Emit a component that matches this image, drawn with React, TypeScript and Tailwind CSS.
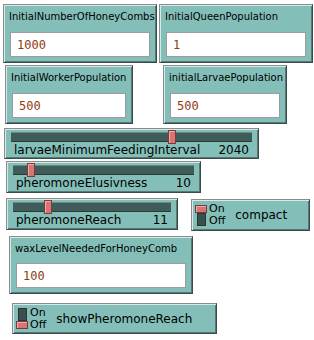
import React from "react";

const box =
  "bg-[#83bfb8] border border-[#8c8c8c] border-r-[#3c4a48] border-b-[#3c4a48] shadow-[inset_1px_1px_0_#d3ebe8,inset_-1px_-1px_0_#557a76]";

function InputBox({ label, value, className }: { label: string; value: string; className: string }) {
  return (
    <div className={`${box} flex flex-col ${className}`}>
      <div className="pl-[5px] pt-[6px] text-[10px] leading-[12px] text-black font-['DejaVu_Sans',sans-serif] whitespace-nowrap">
        {label}
      </div>
      <div className="mt-auto mb-[5px] mx-[6px] h-[25px] bg-white border border-[#9c9c9c] flex items-center pl-[6px] text-[12px] text-[#8f3b10] font-['DejaVu_Sans_Mono',monospace]">
        {value}
      </div>
    </div>
  );
}

function Slider({ label, value, pos, className }: { label: string; value: string; pos: number; className: string }) {
  return (
    <div className={`${box} flex flex-col px-[6px] pt-[3px] ${className}`}>
      <div className="relative h-[10px] bg-[#3f5c58] border-t border-t-[#6a8a85] border-b border-b-[#2b3a38]">
        <div
          className="absolute top-[-3px] w-[8px] h-[14px] bg-[#d77474] border border-[#7c3a3a] shadow-[inset_1px_1px_0_#eeaaaa]"
          style={{ left: `calc(${pos * 100}% - 4px)` }}
        />
      </div>
      <div className="flex justify-between px-[3px] mt-[1px] text-[12px] leading-[14px] text-black font-['DejaVu_Sans',sans-serif] whitespace-nowrap">
        <span>{label}</span>
        <span>{value}</span>
      </div>
    </div>
  );
}

function Switch({ label, on, className }: { label: string; on: boolean; className: string }) {
  const handle = <div className="w-[12px] h-[8px] bg-[#d77474] border border-[#7c3a3a] shadow-[inset_1px_1px_0_#eeaaaa]" />;
  return (
    <div className={`${box} flex items-center pl-[3px] ${className}`}>
      <div className="flex flex-col items-center w-[12px] h-[21px]">
        {on && handle}
        <div className="flex-1 w-[9px] bg-[#3b4f4c] border border-[#2a3634]" />
        {!on && handle}
      </div>
      <div className="ml-[2px] flex flex-col text-[11px] leading-[12px] text-black font-['DejaVu_Sans',sans-serif]">
        <span>On</span>
        <span>Off</span>
      </div>
      <div className="ml-[10px] text-[12px] text-black font-['DejaVu_Sans',sans-serif] whitespace-nowrap">{label}</div>
    </div>
  );
}

export default function App() {
  return (
    <main className="w-[314px] h-[340px] bg-white overflow-hidden">
      <div className="flex flex-col">
        <div className="flex mt-[4px] ml-[3px]">
          <InputBox label="InitialNumberOfHoneyCombs" value="1000" className="w-[154px] h-[59px]" />
          <InputBox label="InitialQueenPopulation" value="1" className="ml-[2px] w-[154px] h-[59px]" />
        </div>
        <div className="flex mt-[2px] ml-[5px]">
          <InputBox label="InitialWorkerPopulation" value="500" className="w-[128px] h-[59px]" />
          <InputBox label="initialLarvaePopulation" value="500" className="ml-[30px] w-[124px] h-[59px]" />
        </div>
        <Slider label="larvaeMinimumFeedingInterval" value="2040" pos={0.67} className="mt-[4px] ml-[4px] w-[255px] h-[31px]" />
        <Slider label="pheromoneElusivness" value="10" pos={0.1} className="mt-[2px] ml-[6px] w-[195px] h-[32px]" />
        <div className="flex items-start mt-[5px] ml-[6px]">
          <Slider label="pheromoneReach" value="11" pos={0.22} className="w-[172px] h-[32px]" />
          <Switch label="compact" on={true} className="ml-[13px] mt-[1px] w-[119px] h-[32px]" />
        </div>
        <InputBox label="waxLevelNeededForHoneyComb" value="100" className="mt-[5px] ml-[9px] w-[184px] h-[58px]" />
        <Switch label="showPheromoneReach" on={false} className="mt-[9px] ml-[12px] w-[205px] h-[31px]" />
      </div>
    </main>
  );
}
